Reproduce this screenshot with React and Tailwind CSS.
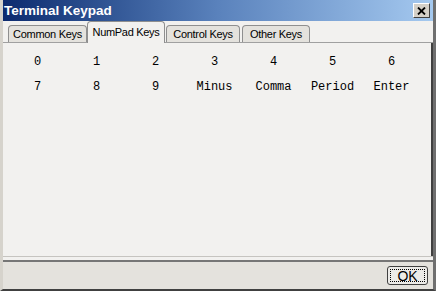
import React from "react";

const row1 = ["0", "1", "2", "3", "4", "5", "6"];
const row2 = ["7", "8", "9", "Minus", "Comma", "Period", "Enter"];
const tabs = [
  { label: "Common Keys", w: "w-[79px] mr-0" },
  { label: "NumPad Keys", w: "w-[78px] mr-[1px]" },
  { label: "Control Keys", w: "w-[74px] mr-[2px]" },
  { label: "Other Keys", w: "w-[68px] mr-0" },
];

const App = () => {
  return (
    <div className="w-[436px] h-[291px] flex flex-col bg-[#e4e2dd] border-l-[3px] border-l-[#d6d3cc] border-r-[3px] border-r-[#6f6f6f] border-b-[2px] border-b-[#404040] overflow-hidden" style={{ fontFamily: '"Liberation Sans", sans-serif' }}>
      {/* title bar */}
      <div className="h-[21px] -mx-[3px] flex items-center justify-between pl-[4px] pr-[6px] bg-gradient-to-r from-[#0c2a6e] via-[#5a82bc] to-[#a6caf0]">
        <span className="text-white font-bold text-[13.5px] leading-none">Terminal Keypad</span>
        <div className="w-[17px] h-[15px] bg-[#d4d0c8] border border-t-white border-l-white border-r-[#404040] border-b-[#404040] flex items-center justify-center">
          <svg width="9" height="8" viewBox="0 0 9 8">
            <path d="M1 0.5 L8 7.5 M8 0.5 L1 7.5" stroke="#000" strokeWidth="1.8" />
          </svg>
        </div>
      </div>

      {/* tab body */}
      <div className="flex-1 flex flex-col bg-[#f2f1ef]">
        <div className="flex items-end h-[22px] pl-[5px] bg-[#f2f1ef] border-b border-[#a0a0a0]">
          {tabs.map((t, i) => (
            <div
              key={t.label}
              className={
                (i === 1
                  ? "h-[22px] -mb-px bg-[#f2f1ef] "
                  : "h-[17px] bg-[#e4e2dd] ") +
                t.w +
                " flex items-center justify-center border border-b-0 border-[#8f8f8f] rounded-t-[4px] text-[11px] tracking-[-0.3px] text-black"
              }
            >
              {t.label}
            </div>
          ))}
        </div>
        <div className="flex-1 border-r-[2px] border-r-[#404040] px-[5px] pt-[6px]" style={{ fontFamily: '"Liberation Mono", monospace' }}>
          <div className="grid grid-cols-7 w-[413px] text-[12px] text-black">
            {row1.map((k) => (
              <div key={k} className="h-[25px] flex items-center justify-center">{k}</div>
            ))}
            {row2.map((k) => (
              <div key={k} className="h-[25px] flex items-center justify-center">{k}</div>
            ))}
          </div>
        </div>
      </div>

      {/* footer */}
      <div className="h-[6px] bg-[#f2f1ef] border-t border-[#c6c4c0] border-b-[2px] border-b-[#767676]" />
      <div className="h-[27px] flex items-center justify-end pr-[5px]">
        <button className="w-[41px] h-[19px] rounded-[3px] border border-[#404040] bg-[#ecebe8] flex items-center justify-center p-[2px]">
          <span className="w-full h-full border border-dotted border-black flex items-center justify-center text-[14px] leading-none text-black">OK</span>
        </button>
      </div>
    </div>
  );
};

export default App;
